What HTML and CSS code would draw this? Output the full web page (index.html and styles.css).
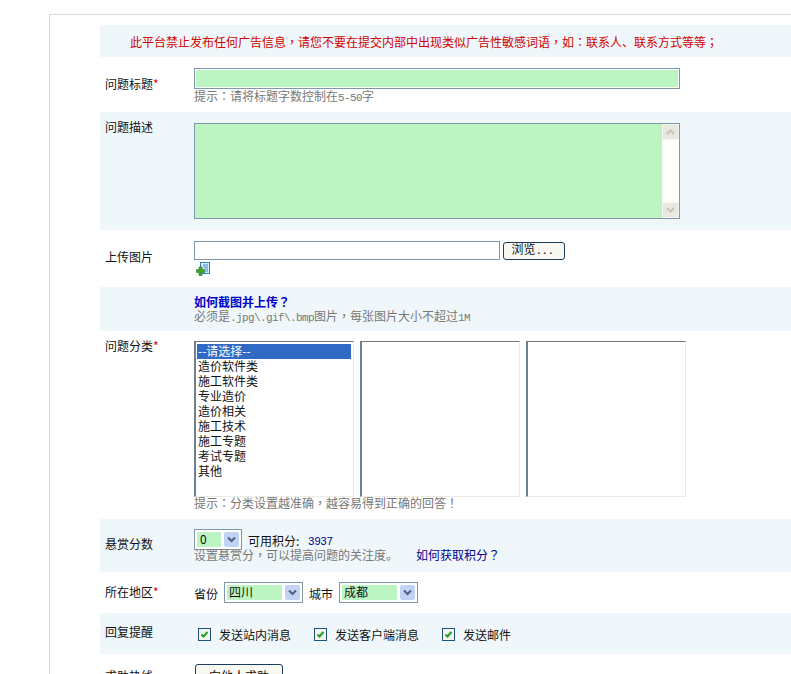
FILE: index.html
```html
<!DOCTYPE html>
<html lang="zh-CN">
<head>
    <meta charset="UTF-8">
    <title>提交问题</title>
    <link rel="stylesheet" href="styles.css">
</head>
<body>
    <div class="panel">
        <div class="row row-notice alt">
            <div>此平台禁止发布任何广告信息<span class="punct">，</span>请您不要在提交内部中出现类似广告性敏感词语<span class="punct">，</span>如<span class="punct">：</span>联系人、联系方式等等<span class="punct">；</span></div>
        </div>

        <div class="row row-title">
            <div class="label label-mid">问题标题<span class="req">*</span></div>
            <div class="field">
                <div class="text-input green"></div>
                <div class="hint hint-title">提示<span class="punct">：</span>请将标题字数控制在<span class="latin">5-50</span>字</div>
            </div>
        </div>

        <div class="row row-desc alt">
            <div class="label">问题描述</div>
            <div class="field">
                <div class="textarea">
                    <div class="scrollbar">
                        <div class="scroll-btn">
                            <svg width="9" height="6" viewBox="0 0 9 6"><path d="M1 5 L4.5 1.5 L8 5" fill="none" stroke="#c4c4b8" stroke-width="2"/></svg>
                        </div>
                        <div class="scroll-btn">
                            <svg width="9" height="6" viewBox="0 0 9 6"><path d="M1 1 L4.5 4.5 L8 1" fill="none" stroke="#c4c4b8" stroke-width="2"/></svg>
                        </div>
                    </div>
                </div>
            </div>
        </div>

        <div class="row row-upload">
            <div class="label label-upload">上传图片</div>
            <div class="field">
                <div class="file-line">
                    <div class="file-input"></div>
                    <div class="btn btn-browse"><span>浏览<span class="latin">...</span></span></div>
                </div>
                <svg class="add-icon" width="14" height="14" viewBox="0 0 14 14">
                    <rect x="4.5" y="0.5" width="9" height="11" fill="#d4ecfa" stroke="#2f86bd"/>
                    <path d="M7 3h5M7 5h5M9 7h3M9 9h3" stroke="#3f8fc4"/>
                    <path d="M3 5h3v2.500h2.500v3h-2.500v3h-3v-3h-2.500v-3h2.500z" fill="#3fa32f" stroke="#2a7a20" stroke-width="0.6"/>
                </svg>
            </div>
        </div>

        <div class="row row-how alt">
            <div class="label"></div>
            <div class="field">
                <a class="how-link">如何截图并上传<span class="punct">？</span></a>
                <div class="hint hint-tight">必须是<span class="latin">.jpg\.gif\.bmp</span>图片<span class="punct">，</span>每张图片大小不超过<span class="latin">1M</span></div>
            </div>
        </div>

        <div class="row row-cat">
            <div class="label">问题分类<span class="req">*</span></div>
            <div class="field">
                <div class="lists">
                    <div class="listbox">
                        <div class="opt selected">--请选择--</div>
                        <div class="opt">造价软件类</div>
                        <div class="opt">施工软件类</div>
                        <div class="opt">专业造价</div>
                        <div class="opt">造价相关</div>
                        <div class="opt">施工技术</div>
                        <div class="opt">施工专题</div>
                        <div class="opt">考试专题</div>
                        <div class="opt">其他</div>
                    </div>
                    <div class="listbox"></div>
                    <div class="listbox"></div>
                </div>
                <div class="hint hint-cat">提示<span class="punct">：</span>分类设置越准确<span class="punct">，</span>越容易得到正确的回答<span class="punct">！</span></div>
            </div>
        </div>

        <div class="row row-reward alt">
            <div class="label label-reward">悬赏分数</div>
            <div class="field">
                <div class="reward-line">
                    <div class="dropdown dropdown-score">
                        <span class="drop-value">0</span>
                        <span class="drop-arrow"><svg width="9" height="7" viewBox="0 0 9 7"><path d="M1 1.500 L4.500 5 L8 1.500" fill="none" stroke="#4d6185" stroke-width="2"/></svg></span>
                    </div>
                    <span class="points-label">可用积分:</span>
                    <span class="points">3937</span>
                </div>
                <div class="hint hint-reward">设置悬赏分<span class="punct">，</span>可以提高问题的关注度。<a class="points-link">如何获取积分<span class="punct">？</span></a></div>
            </div>
        </div>

        <div class="row row-region">
            <div class="label label-region">所在地区<span class="req">*</span></div>
            <div class="field region-line">
                <span class="region-text">省份</span>
                <div class="dropdown dropdown-city">
                    <span class="drop-value">四川</span>
                    <span class="drop-arrow"><svg width="9" height="7" viewBox="0 0 9 7"><path d="M1 1.500 L4.500 5 L8 1.500" fill="none" stroke="#4d6185" stroke-width="2"/></svg></span>
                </div>
                <span class="region-text">城市</span>
                <div class="dropdown dropdown-city">
                    <span class="drop-value">成都</span>
                    <span class="drop-arrow"><svg width="9" height="7" viewBox="0 0 9 7"><path d="M1 1.500 L4.500 5 L8 1.500" fill="none" stroke="#4d6185" stroke-width="2"/></svg></span>
                </div>
            </div>
        </div>

        <div class="row row-remind alt">
            <div class="label">回复提醒</div>
            <div class="field remind-line">
                <span class="check-item"><span class="checkbox"><svg width="9" height="9" viewBox="0 0 9 9"><path d="M1.500 4.500 L3.500 6.500 L7.500 2" fill="none" stroke="#21a121" stroke-width="2"/></svg></span>发送站内消息</span>
                <span class="check-item"><span class="checkbox"><svg width="9" height="9" viewBox="0 0 9 9"><path d="M1.500 4.500 L3.500 6.500 L7.500 2" fill="none" stroke="#21a121" stroke-width="2"/></svg></span>发送客户端消息</span>
                <span class="check-item"><span class="checkbox"><svg width="9" height="9" viewBox="0 0 9 9"><path d="M1.500 4.500 L3.500 6.500 L7.500 2" fill="none" stroke="#21a121" stroke-width="2"/></svg></span>发送邮件</span>
            </div>
        </div>

        <div class="row row-help">
            <div class="label label-help">求助热线</div>
            <div class="field">
                <div class="btn btn-help">向他人求助</div>
            </div>
        </div>
    </div>
</body>
</html>
```

FILE: styles.css
```css
html, body {
    height: 100%;
    overflow: hidden;
}
body {
    margin: 0;
    padding: 14px 0 0 49px;
    box-sizing: border-box;
    background-color: #fff;
    color: #111;
    font-family: "Noto Sans CJK SC", "Liberation Sans", sans-serif;
    font-size: 12px;
    line-height: 15px;
}
.panel {
    border-top: 1px solid #d0d8de;
    border-left: 1px solid #d0d8de;
    padding: 10px 0 0 50px;
}
.row {
    display: flex;
}
.alt {
    background-color: #eff7fb;
}
.label {
    width: 94px;
    padding-left: 5px;
    box-sizing: border-box;
    flex-shrink: 0;
}
.req {
    color: #d00;
}
.hint {
    color: #777;
}
/* centred full-width punctuation, like the original bitmap font */
.punct {
    font-family: "Noto Sans CJK TC", sans-serif;
    font-feature-settings: "locl" 0;
}
/* 6px wide latin characters */
.latin {
    font-family: "Liberation Mono", monospace;
    font-size: 11px;
    letter-spacing: -0.6px;
}
.row-notice {
    height: 32px;
    padding-left: 30px;
    align-items: center;
    color: #d00000;
}
.row-title {
    height: 55px;
    padding-top: 11px;
    box-sizing: border-box;
}
.label-mid {
    padding-top: 8px;
}
.text-input {
    width: 486px;
    height: 21px;
    box-sizing: border-box;
    border: 1px solid #8096aa;
}
.green {
    background-color: #bdf5c2;
    box-shadow: inset 0 0 0 1px #fff;
}
.hint-title {
    margin-top: -1px;
}
.row-desc {
    height: 118px;
    padding-top: 7px;
    box-sizing: border-box;
}
.row-desc .field {
    padding-top: 4px;
}
.textarea {
    width: 486px;
    height: 96px;
    box-sizing: border-box;
    border: 1px solid #8096aa;
    background-color: #bdf5c2;
    display: flex;
    justify-content: flex-end;
}
.scrollbar {
    width: 17px;
    background-color: #fdfdf9;
    display: flex;
    flex-direction: column;
    justify-content: space-between;
}
.scroll-btn {
    height: 16px;
    background-color: #e9e8e0;
    border: 1px solid #f6f5ef;
    box-sizing: border-box;
    display: flex;
    align-items: center;
    justify-content: center;
}
.row-upload {
    height: 57px;
    padding-top: 11px;
    box-sizing: border-box;
}
.label-upload {
    padding-top: 8px;
}
.file-line {
    display: flex;
    gap: 3px;
    align-items: flex-start;
}
.file-input {
    width: 306px;
    height: 19px;
    box-sizing: border-box;
    border: 1px solid #8096aa;
    background-color: #fff;
}
.btn {
    box-sizing: border-box;
    border: 1px solid #1d3c5c;
    border-radius: 3px;
    background-color: #f8f8f3;
    display: flex;
    align-items: center;
    justify-content: center;
}
.btn-browse {
    width: 62px;
    height: 18px;
    margin-top: 1px;
    padding: 0 3px 3px 0;
}
.add-icon {
    display: block;
    margin: 2px 0 0 2px;
}
.row-how {
    height: 44px;
    padding-top: 8px;
    box-sizing: border-box;
}
.how-link {
    display: block;
    color: #0000c8;
    font-weight: bold;
    line-height: 14px;
}
.hint-tight {
    line-height: 14px;
}
.row-cat {
    height: 188px;
    padding-top: 7px;
    box-sizing: border-box;
}
.lists {
    display: flex;
    gap: 6px;
    margin-top: 3px;
}
.listbox {
    width: 160px;
    height: 156px;
    box-sizing: border-box;
    border-top: 1px solid #70767c;
    border-left: 2px solid #70808c;
    border-right: 1px solid #ecebe2;
    border-bottom: 1px solid #ecebe2;
    padding: 2px 2px 2px 1px;
    background-color: #fff;
}
.opt {
    padding: 0 0 1px 1px;
    line-height: 14px;
}
.opt.selected {
    background-color: #316ac5;
    color: #fff;
}
.hint-cat {
    margin-top: -2px;
}
.row-reward {
    height: 53px;
    padding-top: 10px;
    box-sizing: border-box;
}
.label-reward {
    padding-top: 7px;
}
.reward-line {
    display: flex;
    align-items: flex-start;
    height: 20px;
}
.dropdown {
    height: 21px;
    box-sizing: border-box;
    border: 1px solid #8096aa;
    padding: 2px;
    background-color: #fff;
    display: flex;
    flex-shrink: 0;
}
.drop-value {
    flex: 1;
    background-color: #bdf5c2;
    padding-left: 2px;
    line-height: 13px;
}
.drop-arrow {
    width: 15px;
    margin-left: 3px;
    background-color: #c2d2f5;
    border-radius: 2px;
    display: flex;
    align-items: center;
    justify-content: center;
}
.dropdown-score {
    width: 48px;
}
.dropdown-score .drop-value {
    padding-left: 3px;
}
.points-label {
    margin: 4px 0 0 6px;
}
.points {
    margin: 5px 0 0 9px;
    color: #000090;
    font-family: "Liberation Sans", sans-serif;
    font-size: 11px;
}
.hint-reward {
    margin-top: -2px;
}
.points-link {
    margin-left: 18px;
    color: #000090;
}
.row-region {
    height: 41px;
    padding-top: 10px;
    box-sizing: border-box;
}
.label-region {
    padding-top: 2px;
}
.region-line {
    display: flex;
    align-items: flex-start;
    gap: 6px;
}
.region-text {
    margin-top: 4px;
}
.dropdown-city {
    width: 79px;
}
.row-remind {
    height: 41px;
    padding-top: 11px;
    box-sizing: border-box;
}
.remind-line {
    display: flex;
    padding: 3px 0 0 4px;
}
.check-item {
    display: flex;
    align-items: center;
    height: 15px;
    margin-right: 23px;
}
.checkbox {
    width: 13px;
    height: 13px;
    box-sizing: border-box;
    border: 1px solid #1c5180;
    background-color: #f4f4ee;
    margin-right: 8px;
    display: flex;
    align-items: center;
    justify-content: center;
}
.row-help {
    padding-top: 10px;
}
.label-help {
    padding-top: 4px;
}
.btn-help {
    width: 88px;
    height: 22px;
    margin-left: 1px;
}
```
